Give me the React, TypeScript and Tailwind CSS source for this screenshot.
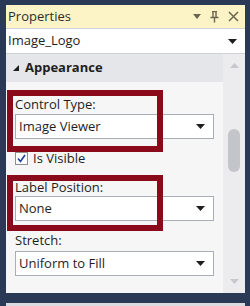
import React from 'react';

const font = { fontFamily: '"Open Sans", "Noto Sans", sans-serif' };

function Caret({ className = '' }: { className?: string }) {
  return (
    <svg width="9" height="5" viewBox="0 0 9 5" className={className}>
      <path d="M0 0h9L4.5 5z" fill="#1e1e1e" />
    </svg>
  );
}

function Dropdown({ value }: { value: string }) {
  return (
    <div className="flex h-[25px] w-[199px] items-center justify-between border border-[#a9adb5] bg-white pl-[3px] pr-[8px] text-[13px] text-[#1e1e1e]">
      <span>{value}</span>
      <Caret />
    </div>
  );
}

export default function App() {
  return (
    <div className="h-[306px] w-[250px] overflow-hidden bg-[#2a3a56] pl-[6px] pr-[5px] pt-[5px]" style={font}>
      <div className="relative flex h-[288px] flex-col bg-[#f6f6f6]">
        {/* title */}
        <div className="flex h-[23px] items-center justify-between bg-[#fcf3c6] pl-[2px] pr-[6px]">
          <span className="text-[13px] text-[#2d2d2d]">Properties</span>
          <div className="flex items-center gap-[9px]">
            <svg width="8" height="5" viewBox="0 0 8 5">
              <path d="M0 0h8L4 5z" fill="#6b664f" />
            </svg>
            <svg width="9" height="12" viewBox="0 0 9 12">
              <path d="M2 0.5h5M3 0.5v6M6 0.5v6M0.5 6.5h8M4.5 6.5v5" stroke="#6b664f" strokeWidth="1.4" fill="none" />
            </svg>
            <svg width="11" height="11" viewBox="0 0 11 11">
              <path d="M1 1l9 9M10 1l-9 9" stroke="#6b664f" strokeWidth="1.5" />
            </svg>
          </div>
        </div>
        {/* object selector */}
        <div className="flex h-[26px] items-center justify-between border-y border-[#cfd2d8] bg-white pl-[2px] pr-[8px] text-[13px] text-[#1e1e1e]">
          <span>Image_Logo</span>
          <Caret />
        </div>
        <div className="flex flex-1">
          <div className="flex flex-1 flex-col">
            <div className="flex h-[28px] items-center gap-[6px] bg-[#e4e6ea] pl-[7px] text-[13px] font-bold text-[#1e1e1e]">
              <svg width="6" height="6" viewBox="0 0 6 6">
                <path d="M6 0v6H0z" fill="#1e1e1e" />
              </svg>
              <span>Appearance</span>
            </div>
            <div className="flex flex-col pl-[9px] pt-[13px] text-[13px] text-[#1e1e1e]">
              <span className="leading-[18px]">Control Type:</span>
              <div className="mt-[1px]">
                <Dropdown value="Image Viewer" />
              </div>
              <label className="mt-[10px] flex items-center gap-[5px] leading-[18px]">
                <span className="flex h-[13px] w-[13px] items-center justify-center border border-[#8f8f8f] bg-white">
                  <svg width="9" height="9" viewBox="0 0 9 9">
                    <path d="M1 4.5l2.5 3L8 1" stroke="#1c3d9e" strokeWidth="1.6" fill="none" />
                  </svg>
                </span>
                Is Visible
              </label>
              <span className="mt-[11px] leading-[18px]">Label Position:</span>
              <Dropdown value="None" />
              <span className="mt-[10px] leading-[18px]">Stretch:</span>
              <div className="mt-[2px]">
                <Dropdown value="Uniform to Fill" />
              </div>
            </div>
          </div>
          {/* scrollbar */}
          <div className="flex w-[22px] flex-col items-center bg-[#ececee] py-[9px]">
            <svg width="9" height="5" viewBox="0 0 9 5">
              <path d="M4.5 0L9 5H0z" fill="#c7c8cc" />
            </svg>
            <div className="mt-[61px] h-[43px] w-[12px] rounded-[6px] bg-[#c4c5ca]" />
            <div className="flex-1" />
            <svg width="9" height="5" viewBox="0 0 9 5">
              <path d="M0 0h9L4.5 5z" fill="#c7c8cc" />
            </svg>
          </div>
        </div>
        {/* annotation boxes */}
        <div className="absolute left-[1px] top-[85px] h-[62px] w-[156px] border-[6px] border-[#8a0a1c]" />
        <div className="absolute left-[1px] top-[170px] h-[56px] w-[156px] border-[6px] border-[#8a0a1c]" />
      </div>
      <div className="mt-[10px] h-[3px] bg-[#d9dbe0]" />
    </div>
  );
}
